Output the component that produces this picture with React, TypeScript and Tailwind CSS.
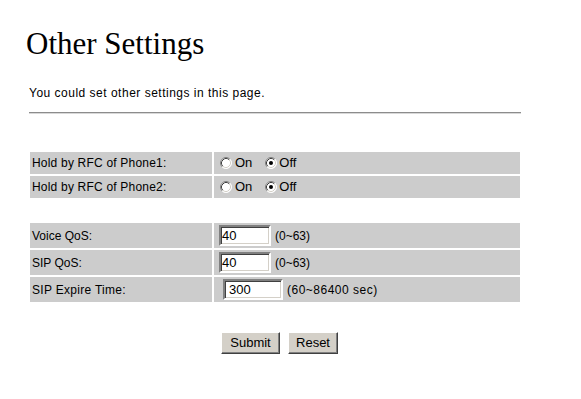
import React from "react";

function Radio({ checked }: { checked?: boolean }) {
  return (
    <svg width="12" height="12" viewBox="0 0 12 12" className="shrink-0">
      <circle cx="6" cy="6" r="5.5" fill="#ffffff" />
      <path d="M2.11 9.89 A5.5 5.5 0 0 1 9.89 2.11" fill="none" stroke="#808080" strokeWidth="1" />
      <path d="M9.89 2.11 A5.5 5.5 0 0 1 2.11 9.89" fill="none" stroke="#ffffff" strokeWidth="1" />
      <path d="M2.82 9.18 A4.5 4.5 0 0 1 9.18 2.82" fill="none" stroke="#404040" strokeWidth="1" />
      <path d="M9.18 2.82 A4.5 4.5 0 0 1 2.82 9.18" fill="none" stroke="#d4d0c8" strokeWidth="1" />
      {checked && <circle cx="6" cy="6" r="2" fill="#000000" />}
    </svg>
  );
}

function OnOff() {
  return (
    <div className="flex items-center pl-[6px] text-[13px]">
      <Radio />
      <span className="ml-[3px]">On</span>
      <span className="ml-[13px] flex"><Radio checked /></span>
      <span className="ml-[2px]">Off</span>
    </div>
  );
}

const inputCls =
  "h-[21px] border-2 border-solid border-t-[#808080] border-l-[#808080] border-b-white border-r-white shadow-[inset_1px_1px_0_#404040,inset_-1px_-1px_0_#d4d0c8] bg-white px-[1px] text-[13px] text-black outline-none font-['Liberation_Sans',Arial,sans-serif]";

const btnCls =
  "h-[22px] bg-[#d4d0c8] border border-solid border-t-white border-l-white border-b-[#404040] border-r-[#404040] shadow-[inset_-1px_-1px_0_#808080] text-[13px] text-black font-['Liberation_Sans',Arial,sans-serif]";

export default function App() {
  return (
    <div className="min-h-screen bg-white pt-[26px] text-[12px] text-black font-['Liberation_Sans',Arial,sans-serif]">
      <h1 className="ml-[26px] text-[31px] leading-[36px] font-normal font-['Liberation_Serif','Times_New_Roman',serif]">
        Other Settings
      </h1>
      <p className="ml-[29px] mt-[24px] leading-[14px] tracking-[0.5px]">You could set other settings in this page.</p>
      <div className="ml-[29px] mt-[12px] w-[492px] border-t border-t-[#8c8c8c] border-b border-b-[#d8d8d8]" />

      <div className="ml-[30px] mt-[38px] w-[490px] grid grid-cols-[182px_306px] gap-[2px]">
        <div className="h-[22px] bg-[#cccccc] flex items-center pl-[2px] tracking-[0.2px]">Hold by RFC of Phone1:</div>
        <div className="h-[22px] bg-[#cccccc] flex items-center"><OnOff /></div>
        <div className="h-[22px] bg-[#cccccc] flex items-center pl-[2px] tracking-[0.2px]">Hold by RFC of Phone2:</div>
        <div className="h-[22px] bg-[#cccccc] flex items-center"><OnOff /></div>

        <div className="col-span-2 h-[21px]" />

        <div className="h-[25px] bg-[#cccccc] flex items-center pl-[2px]">Voice QoS:</div>
        <div className="h-[25px] bg-[#cccccc] flex items-center pl-[5px]">
          <div className="flex items-baseline">
            <input readOnly defaultValue="40" className={`${inputCls} w-[52px]`} />
            <span className="ml-[4px]">(0~63)</span>
          </div>
        </div>
        <div className="h-[25px] bg-[#cccccc] flex items-center pl-[2px]">SIP QoS:</div>
        <div className="h-[25px] bg-[#cccccc] flex items-center pl-[5px]">
          <div className="flex items-baseline">
            <input readOnly defaultValue="40" className={`${inputCls} w-[52px]`} />
            <span className="ml-[4px]">(0~63)</span>
          </div>
        </div>
        <div className="h-[25px] bg-[#cccccc] flex items-center pl-[2px] tracking-[0.3px]">SIP Expire Time:</div>
        <div className="h-[25px] bg-[#cccccc] flex items-center pl-[9px]">
          <div className="flex items-baseline">
            <input readOnly defaultValue="300" className={`${inputCls} w-[60px] pl-[4px]`} />
            <span className="ml-[4px] tracking-[0.5px]">(60~86400 sec)</span>
          </div>
        </div>
      </div>

      <div className="ml-[221px] mt-[30px] flex gap-[8px]">
        <button className={`${btnCls} w-[59px]`}>Submit</button>
        <button className={`${btnCls} w-[50px]`}>Reset</button>
      </div>
    </div>
  );
}
